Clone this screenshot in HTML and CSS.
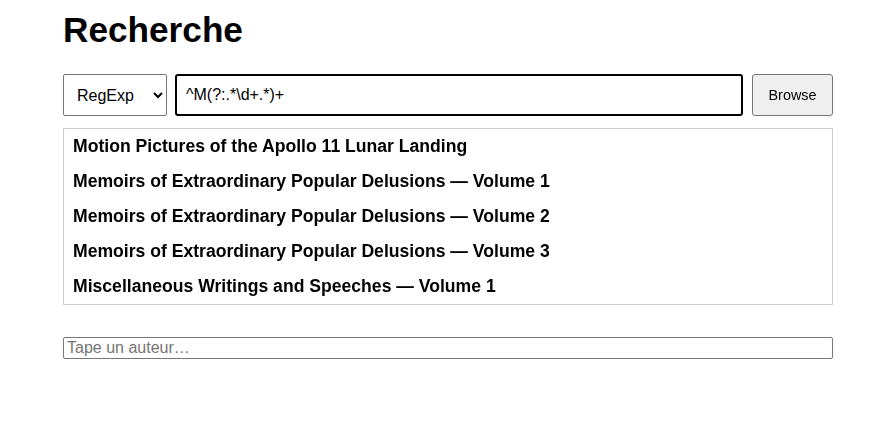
FILE: index.html
```html
<!DOCTYPE html>
<html lang="fr">
<head>
<meta charset="utf-8">
<title>Recherche</title>
<link rel="stylesheet" href="styles.css">
</head>
<body>
<main class="page">
  <h1 class="title">Recherche</h1>
  <div class="search-row">
    <select class="mode">
      <option>RegExp</option>
      <option>Texte</option>
    </select>
    <input class="query" type="text" value="^M(?:.*\d+.*)+" autofocus>
    <button class="browse" type="button">Browse</button>
  </div>
  <ul class="results">
    <li>Motion Pictures of the Apollo 11 Lunar Landing</li>
    <li>Memoirs of Extraordinary Popular Delusions — Volume 1</li>
    <li>Memoirs of Extraordinary Popular Delusions — Volume 2</li>
    <li>Memoirs of Extraordinary Popular Delusions — Volume 3</li>
    <li>Miscellaneous Writings and Speeches — Volume 1</li>
  </ul>
  <input class="author" type="text" placeholder="Tape un auteur…">
</main>
</body>
</html>
```
FILE: styles.css
```css
html, body {
  margin: 0;
  padding: 0;
  background: #fff;
}
body {
  font-family: "Liberation Sans", Arial, sans-serif;
  color: #000;
}
.page {
  width: 770px;
  margin-left: 63px;
  padding-top: 10px;
}
.title {
  font-size: 35.2px;
  font-weight: bold;
  line-height: 40px;
  margin: 0 0 24px;
}
.search-row {
  display: flex;
  gap: 8px;
  height: 42px;
  align-items: stretch;
}
.mode {
  width: 104px;
  height: 42px;
  box-sizing: border-box;
  font-family: "Liberation Sans", Arial, sans-serif;
  font-size: 16px;
  padding: 0 8px 0 9px;
  border: 1px solid #767676;
  border-radius: 2px;
  background: #fff;
  color: #000;
}
.query {
  flex: 1;
  box-sizing: border-box;
  height: 42px;
  font-family: "Liberation Sans", Arial, sans-serif;
  font-size: 16px;
  padding: 0 9px;
  border: 2px solid #000;
  border-radius: 3px;
  outline: none;
  color: #000;
}
.browse {
  width: 81px;
  margin-left: 1px;
  height: 42px;
  box-sizing: border-box;
  font-family: "Liberation Sans", Arial, sans-serif;
  font-size: 14.4px;
  background: #efefef;
  border: 1px solid #767676;
  border-radius: 3px;
  color: #000;
  padding: 0;
}
.results {
  list-style: none;
  margin: 12px 0 0;
  padding: 0;
  border: 1px solid #ccc;
}
.results li {
  font-size: 17.6px;
  font-weight: bold;
  line-height: 20px;
  padding: 6.5px 9px 8.5px;
}
.author {
  display: block;
  width: 770px;
  height: 22px;
  box-sizing: border-box;
  margin-top: 32px;
  font-family: "Liberation Sans", Arial, sans-serif;
  font-size: 16px;
  padding: 0 3px;
  border: 1px solid #767676;
  border-radius: 2px;
}
.author::placeholder {
  color: #757575;
}
```
